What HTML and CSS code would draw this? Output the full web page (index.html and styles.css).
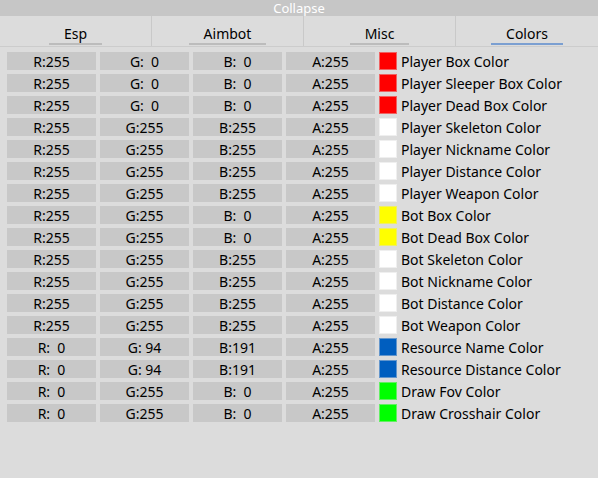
FILE: index.html
```html
<!DOCTYPE html>
<html>
<head>
<meta charset="utf-8">
<link rel="stylesheet" href="styles.css">
</head>
<body>
<div class="window">
  <div class="titlebar">Collapse</div>
  <div class="tabs">
    <div class="tab"><span class="tab-label">Esp</span></div>
    <div class="tab"><span class="tab-label">Aimbot</span></div>
    <div class="tab"><span class="tab-label">Misc</span></div>
    <div class="tab tab-active"><span class="tab-label">Colors</span></div>
  </div>
  <div class="rows">
    <div class="row"><span class="cell">R:255</span><span class="cell">G:  0</span><span class="cell">B:  0</span><span class="cell">A:255</span><span class="swatch red"></span><span class="label">Player Box Color</span></div>
    <div class="row"><span class="cell">R:255</span><span class="cell">G:  0</span><span class="cell">B:  0</span><span class="cell">A:255</span><span class="swatch red"></span><span class="label">Player Sleeper Box Color</span></div>
    <div class="row"><span class="cell">R:255</span><span class="cell">G:  0</span><span class="cell">B:  0</span><span class="cell">A:255</span><span class="swatch red"></span><span class="label">Player Dead Box Color</span></div>
    <div class="row"><span class="cell">R:255</span><span class="cell">G:255</span><span class="cell">B:255</span><span class="cell">A:255</span><span class="swatch white"></span><span class="label">Player Skeleton Color</span></div>
    <div class="row"><span class="cell">R:255</span><span class="cell">G:255</span><span class="cell">B:255</span><span class="cell">A:255</span><span class="swatch white"></span><span class="label">Player Nickname Color</span></div>
    <div class="row"><span class="cell">R:255</span><span class="cell">G:255</span><span class="cell">B:255</span><span class="cell">A:255</span><span class="swatch white"></span><span class="label">Player Distance Color</span></div>
    <div class="row"><span class="cell">R:255</span><span class="cell">G:255</span><span class="cell">B:255</span><span class="cell">A:255</span><span class="swatch white"></span><span class="label">Player Weapon Color</span></div>
    <div class="row"><span class="cell">R:255</span><span class="cell">G:255</span><span class="cell">B:  0</span><span class="cell">A:255</span><span class="swatch yellow"></span><span class="label">Bot Box Color</span></div>
    <div class="row"><span class="cell">R:255</span><span class="cell">G:255</span><span class="cell">B:  0</span><span class="cell">A:255</span><span class="swatch yellow"></span><span class="label">Bot Dead Box Color</span></div>
    <div class="row"><span class="cell">R:255</span><span class="cell">G:255</span><span class="cell">B:255</span><span class="cell">A:255</span><span class="swatch white"></span><span class="label">Bot Skeleton Color</span></div>
    <div class="row"><span class="cell">R:255</span><span class="cell">G:255</span><span class="cell">B:255</span><span class="cell">A:255</span><span class="swatch white"></span><span class="label">Bot Nickname Color</span></div>
    <div class="row"><span class="cell">R:255</span><span class="cell">G:255</span><span class="cell">B:255</span><span class="cell">A:255</span><span class="swatch white"></span><span class="label">Bot Distance Color</span></div>
    <div class="row"><span class="cell">R:255</span><span class="cell">G:255</span><span class="cell">B:255</span><span class="cell">A:255</span><span class="swatch white"></span><span class="label">Bot Weapon Color</span></div>
    <div class="row"><span class="cell">R:  0</span><span class="cell">G: 94</span><span class="cell">B:191</span><span class="cell">A:255</span><span class="swatch blue"></span><span class="label">Resource Name Color</span></div>
    <div class="row"><span class="cell">R:  0</span><span class="cell">G: 94</span><span class="cell">B:191</span><span class="cell">A:255</span><span class="swatch blue"></span><span class="label">Resource Distance Color</span></div>
    <div class="row"><span class="cell">R:  0</span><span class="cell">G:255</span><span class="cell">B:  0</span><span class="cell">A:255</span><span class="swatch green"></span><span class="label">Draw Fov Color</span></div>
    <div class="row"><span class="cell">R:  0</span><span class="cell">G:255</span><span class="cell">B:  0</span><span class="cell">A:255</span><span class="swatch green"></span><span class="label">Draw Crosshair Color</span></div>
  </div>
</div>
</body>
</html>
```

FILE: styles.css
```css
html, body {
  margin: 0;
  padding: 0;
}

body {
  width: 598px;
  height: 478px;
  overflow: hidden;
  background: #dcdcdc;
  font-family: "Noto Sans", "DejaVu Sans", sans-serif;
  font-size: 14px;
  color: #000;
}

.window {
  width: 598px;
  height: 478px;
  display: flex;
  flex-direction: column;
  background: #dcdcdc;
}

.titlebar {
  height: 15px;
  padding-top: 1px;
  line-height: 15px;
  background: #c6c6c6;
  color: #fff;
  font-size: 13px;
  text-align: center;
}

.tabs {
  display: grid;
  grid-template-columns: 151px 151px 151px 1fr;
  column-gap: 1px;
  background: #c9c9c9;
  height: 30px;
  border-bottom: 1px solid #cccccc;
}

.tab {
  background: #dcdcdc;
  display: flex;
  justify-content: center;
  align-items: flex-start;
  padding-top: 8px;
}

.tab-label {
  display: inline-block;
  padding: 0 15px;
  line-height: 19px;
  border-bottom: 2px solid #bcbcbc;
}

.tab-active .tab-label {
  border-bottom-color: #7b9fd1;
}

.rows {
  display: flex;
  flex-direction: column;
  gap: 4px;
  padding: 5px 0 0 7px;
}

.row {
  display: flex;
  align-items: flex-start;
  height: 18px;
}

.cell {
  width: 89px;
  height: 18px;
  line-height: 19px;
  margin-right: 4px;
  background: #c8c8c8;
  text-align: center;
  white-space: pre;
}

.swatch {
  width: 18px;
  height: 18px;
  box-sizing: border-box;
  box-shadow: inset 0 0 0 1px rgba(220, 220, 220, 0.45);
  margin-right: 4px;
}

.label {
  line-height: 19px;
  white-space: nowrap;
}

.red { background: #ff0000; }
.white { background: #ffffff; }
.yellow { background: #ffff00; }
.blue { background: #005ebf; }
.green { background: #00ff00; }
```
